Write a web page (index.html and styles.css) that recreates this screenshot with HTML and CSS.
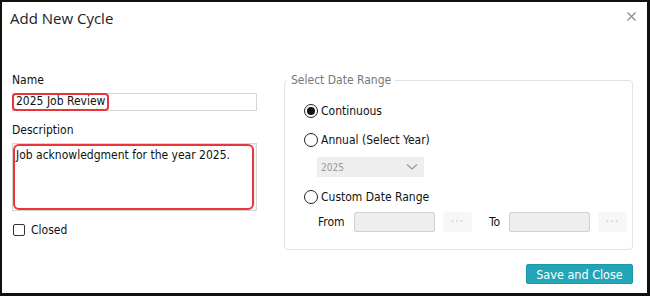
FILE: index.html
```html
<!DOCTYPE html>
<html lang="en">
<head>
  <meta charset="UTF-8">
  <title>Add New Cycle</title>
  <link rel="stylesheet" href="styles.css">
</head>
<body>
  <div class="dialog">
    <div class="dialog-header">
      <h1>Add New Cycle</h1>
      <svg class="close" width="9" height="9" viewBox="0 0 9 9"><path d="M0.5 0.5 L8.5 8.5 M8.5 0.5 L0.5 8.5" stroke="#8a8a8a" stroke-width="1.2"/></svg>
    </div>

    <div class="dialog-body">
      <div class="left-col">
        <label class="field-label">Name</label>
        <div class="text-input">
          <span class="mark">2025 Job Review</span>
        </div>

        <label class="field-label desc-label">Description</label>
        <div class="text-area">
          <div class="mark-box">Job acknowledgment for the year 2025.</div>
        </div>

        <div class="check-row">
          <span class="checkbox"></span>
          <span>Closed</span>
        </div>
      </div>

      <fieldset class="date-range">
        <legend>Select Date Range</legend>

        <div class="radio-row">
          <span class="radio checked"></span>
          <span>Continuous</span>
        </div>

        <div class="radio-row">
          <span class="radio"></span>
          <span>Annual (Select Year)</span>
        </div>
        <div class="year-select">
          <span>2025</span>
          <svg width="12" height="8" viewBox="0 0 12 8"><path d="M1 1.5 L6 6 L11 1.5" fill="none" stroke="#999" stroke-width="1.3"/></svg>
        </div>

        <div class="radio-row">
          <span class="radio"></span>
          <span>Custom Date Range</span>
        </div>
        <div class="dates-row">
          <span class="date-label">From</span>
          <span class="date-input"></span>
          <span class="dots-btn">&middot;&middot;&middot;</span>
          <span class="date-label to">To</span>
          <span class="date-input"></span>
          <span class="dots-btn">&middot;&middot;&middot;</span>
        </div>
      </fieldset>
    </div>

    <div class="dialog-footer">
      <button class="save-btn">Save and Close</button>
    </div>
  </div>
</body>
</html>
```

FILE: styles.css
```css
* {
  margin: 0;
  padding: 0;
  box-sizing: border-box;
}

body {
  font-family: 'DejaVu Sans Condensed', 'DejaVu Sans', sans-serif;
  font-size: 12px;
  color: #111;
  background: #fff;
}

.dialog {
  width: 650px;
  height: 296px;
  border: 2px solid #111;
  border-bottom-width: 3px;
  border-right-width: 3px;
  display: flex;
  flex-direction: column;
}

.dialog-header {
  display: flex;
  justify-content: space-between;
  align-items: flex-start;
  padding: 6px 11px 0 8px;
  height: 71px;
}

.dialog-header h1 {
  font-family: 'Open Sans', sans-serif;
  font-size: 15px;
  font-weight: 400;
  color: #222;
}

.close {
  margin-top: 4px;
}

.dialog-body {
  display: flex;
  padding: 0 14px 0 10px;
  gap: 27px;
}

.left-col {
  width: 245px;
  display: flex;
  flex-direction: column;
}

.field-label {
  display: block;
  line-height: 14px;
  margin-bottom: 6px;
}

.desc-label {
  margin-top: 12px;
}

.text-input {
  height: 18px;
  border: 1px solid #d6d6d6;
  display: flex;
  align-items: stretch;
}

.mark {
  border: 2px solid #e8353b;
  border-radius: 4px;
  padding: 0 2px;
  line-height: 12px;
  margin: -1px 0 -1px -1px;
}

.text-area {
  height: 68px;
  border: 1px solid #d6d6d6;
  background: #f4f4f4;
  padding-right: 2px;
}

.mark-box {
  height: 100%;
  background: #fff;
  border: 2px solid #e8353b;
  border-radius: 6px;
  padding: 2px 1px;
  line-height: 14px;
}

.check-row {
  display: flex;
  align-items: center;
  gap: 6px;
  margin-top: 12px;
  padding-left: 1px;
}

.checkbox {
  width: 12px;
  height: 12px;
  border: 1px solid #333;
  border-radius: 2px;
}

.date-range {
  flex: 1;
  height: 177px;
  border: 1px solid #dde3e8;
  border-radius: 4px;
  padding: 17px 0 0 19px;
}

.date-range legend {
  color: #777;
  padding: 0 4px;
  margin-left: -17px;
}

.radio-row {
  display: flex;
  align-items: center;
  gap: 3px;
  height: 14px;
  margin-bottom: 15px;
}

.radio {
  width: 14px;
  height: 14px;
  border: 1.3px solid #222;
  border-radius: 50%;
  display: flex;
  align-items: center;
  justify-content: center;
}

.radio.checked::after {
  content: "";
  width: 8px;
  height: 8px;
  border-radius: 50%;
  background: #111;
}

.year-select {
  width: 107px;
  height: 20px;
  margin: -5px 0 13px 13px;
  background: #eeeeee;
  display: flex;
  align-items: center;
  justify-content: space-between;
  padding: 0 6px 0 4px;
  color: #999;
  font-size: 10px;
}

.dates-row {
  display: flex;
  align-items: center;
  margin-top: -7px;
  padding-left: 14px;
}

.date-label {
  width: 36px;
}

.date-label.to {
  width: 20px;
  margin-left: 17px;
}

.date-input {
  width: 81px;
  height: 20px;
  background: #eeeeee;
  border: 1px solid #cfcfcf;
  border-radius: 2px;
}

.dots-btn {
  width: 29px;
  height: 20px;
  margin-left: 8px;
  background: #f7f7f7;
  border-radius: 3px;
  color: #c4c4c4;
  font-size: 12px;
  letter-spacing: 1px;
  text-align: center;
  line-height: 20px;
}

.dialog-footer {
  display: flex;
  justify-content: flex-end;
  padding: 14px 14px 0 0;
}

.save-btn {
  font-family: inherit;
  font-size: 12.5px;
  color: #fff;
  background: #22a6b7;
  border: 1px solid #1c98a8;
  border-radius: 2px;
  width: 107px;
  height: 20px;
}
```
